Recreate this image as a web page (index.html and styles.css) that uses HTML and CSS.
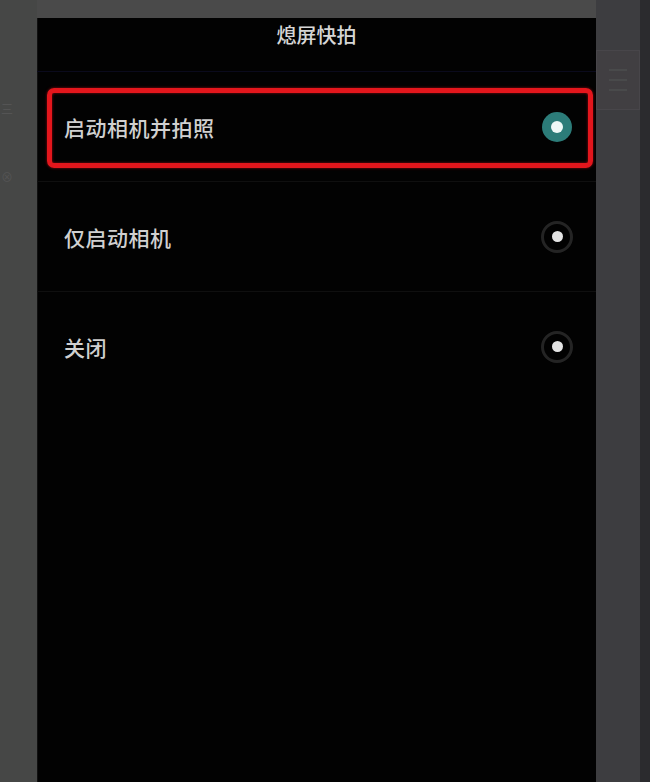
FILE: index.html
```html
<!DOCTYPE html>
<html lang="zh-CN">
<head>
<meta charset="utf-8">
<title>熄屏快拍</title>
<link rel="stylesheet" href="styles.css">
</head>
<body>
<div class="screen">
  <aside class="side-left">
    <span class="ghost g1">三</span>
    <span class="ghost g2">⊗</span>
  </aside>
  <main class="panel">
    <header class="panel-head">熄屏快拍</header>
    <ul class="options">
      <li class="option">
        <span class="label">启动相机并拍照</span>
        <span class="radio checked"><span class="dot"></span></span>
        <span class="highlight"></span>
      </li>
      <li class="option">
        <span class="label">仅启动相机</span>
        <span class="radio"><span class="dot"></span></span>
      </li>
      <li class="option last">
        <span class="label">关闭</span>
        <span class="radio"><span class="dot"></span></span>
      </li>
    </ul>
  </main>
  <aside class="side-right">
    <div class="right-col">
      <div class="menu-box">
        <span class="bar"></span>
        <span class="bar"></span>
        <span class="bar"></span>
      </div>
    </div>
    <div class="edge"></div>
  </aside>
</div>
</body>
</html>
```

FILE: styles.css
```css
html, body {
  margin: 0;
  padding: 0;
  height: 100%;
  background: #4a4a4a;
  overflow: hidden;
}

.screen {
  display: flex;
  width: 650px;
  height: 782px;
  font-family: "Noto Sans CJK SC", "Noto Sans", sans-serif;
}

.side-left {
  width: 37px;
  flex: none;
  background: #464746;
  display: flex;
  flex-direction: column;
  padding-top: 100px;
  gap: 50px;
  box-sizing: border-box;
}

.ghost {
  color: #545454;
  font-size: 12px;
  line-height: 18px;
  margin-left: 1px;
}

.panel {
  width: 559px;
  flex: none;
  margin-top: 18px;
  background: #020202;
  display: flex;
  flex-direction: column;
  box-shadow: inset 1px 0 0 #111;
}

.panel-head {
  height: 54px;
  box-sizing: border-box;
  padding-top: 2px;
  text-align: center;
  color: #d6d6d6;
  font-size: 20px;
  font-weight: 500;
  line-height: 30px;
  border-bottom: 1px solid #0a0a1c;
}

.options {
  list-style: none;
  margin: 0;
  padding: 0;
}

.option {
  position: relative;
  height: 109px;
  display: flex;
  align-items: center;
  justify-content: space-between;
  padding: 0 23px 0 27px;
  border-bottom: 1px solid #0f0f0f;
}

.option.last {
  border-bottom: none;
}

.label {
  color: #d0d0d0;
  font-size: 21px;
  font-weight: 500;
  letter-spacing: 0.5px;
}

.radio {
  width: 32px;
  height: 32px;
  border-radius: 50%;
  box-sizing: border-box;
  border: 3px solid #242424;
  display: flex;
  align-items: center;
  justify-content: center;
}

.radio .dot {
  width: 11px;
  height: 11px;
  border-radius: 50%;
  background: #e4e4e4;
}

.radio.checked {
  width: 30px;
  height: 30px;
  border: none;
  background: #2c7c79;
  margin-right: 1px;
}

.radio.checked .dot {
  width: 12px;
  height: 12px;
  background: #eef8f7;
}

.highlight {
  position: absolute;
  left: 10px;
  right: 3px;
  top: 16px;
  height: 80px;
  box-sizing: border-box;
  border: 5px solid #e3161c;
  border-radius: 7px;
  box-shadow: 0 0 3px rgba(227, 22, 28, 0.6), inset 0 0 3px rgba(227, 22, 28, 0.6);
  pointer-events: none;
}

.side-right {
  flex: 1;
  display: flex;
  background: #3d3d40;
}

.right-col {
  flex: 1;
  padding-top: 50px;
}

.menu-box {
  width: 44px;
  height: 60px;
  box-sizing: border-box;
  background: #413f42;
  border: 1px solid #48464a;
  display: flex;
  flex-direction: column;
  justify-content: center;
  gap: 8px;
  padding: 0 12px;
}

.menu-box .bar {
  height: 2px;
  background: #494a4b;
}

.edge {
  width: 13px;
  flex: none;
  background: #2b2b2e;
}
```
